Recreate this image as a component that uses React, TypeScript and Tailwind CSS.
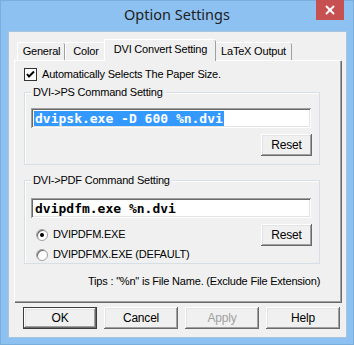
import { X } from 'lucide-react';

const ui = { fontFamily: '"Liberation Sans", Arial, sans-serif', letterSpacing: '-0.2px' };
const mono = { fontFamily: '"DejaVu Sans Mono", "Liberation Mono", monospace', letterSpacing: '0px' };

// classic 3D edges
const raised =
    'shadow-[inset_-1px_-1px_#696969,inset_1px_1px_#ffffff,inset_-2px_-2px_#a0a0a0,inset_2px_2px_#e3e3e3]';
const sunken =
    'shadow-[inset_1px_1px_#a0a0a0,inset_-1px_-1px_#ffffff,inset_2px_2px_#696969,inset_-2px_-2px_#e3e3e3]';

function Button({ label, primary, disabled }: { label: string; primary?: boolean; disabled?: boolean }) {
    return (
        <div
            className={`w-[74px] h-[22px] flex items-center justify-center bg-[#f0f0f0] text-[12px] ${primary ? 'border border-[#3c3c3c]' : ''} ${raised} ${disabled ? 'text-[#a0a0a0]' : 'text-black'}`}
        >
            {label}
        </div>
    );
}

function SmallButton({ label }: { label: string }) {
    return (
        <div className={`w-[51px] h-[22px] flex items-center justify-center bg-[#f0f0f0] text-[12px] text-black ${raised}`}>
            {label}
        </div>
    );
}

function Radio({ checked, label }: { checked?: boolean; label: string }) {
    return (
        <div className="flex items-center gap-[5px] h-[13px]">
            <div className="w-[12px] h-[12px] rounded-full bg-white border border-[#a0a0a0] shadow-[inset_1px_1px_#696969] flex items-center justify-center">
                {checked && <div className="w-[4px] h-[4px] rounded-full bg-black" />}
            </div>
            <span>{label}</span>
        </div>
    );
}

function Group({ title, height, children }: { title: string; height: number; children: React.ReactNode }) {
    return (
        <div
            className="relative border border-[#d5dfe5] shadow-[inset_1px_1px_#ffffff] mx-[9px] w-[296px]"
            style={{ height }}
        >
            <span className="absolute left-[6px] -top-[8px] bg-[#f0f0f0] px-[2px] leading-[14px]">{title}</span>
            {children}
        </div>
    );
}

export default function App() {
    const tabs = [
        { label: 'General', w: 'w-[48px]' },
        { label: 'Color', w: 'w-[41px]' },
        { label: 'DVI Convert Setting', w: 'w-[112px]' },
        { label: 'LaTeX Output', w: 'w-[78px]' },
    ];

    return (
        <div className="w-[354px] h-[345px] bg-[#8cc1f1] border border-[#7aaedd] flex flex-col" style={ui}>
            {/* Title bar */}
            <div className="relative h-[30px] flex items-center justify-center">
                <span
                    className="text-[14.5px] text-[#222] pb-[2px]"
                    style={{ fontFamily: '"Noto Sans", "Open Sans", sans-serif', letterSpacing: '0px' }}
                >
                    Option Settings
                </span>
                <div className="absolute right-[9px] -top-[1px] w-[28px] h-[20px] bg-[#c75050] flex items-center justify-center">
                    <X size={14} strokeWidth={3.2} color="#ffffff" />
                </div>
            </div>

            {/* Client area */}
            <div className="ml-[7px] mr-[6px] h-[307px] bg-[#f0f0f0] border border-[#a9c4dd] text-[11px] text-black flex flex-col">
                {/* Tabs */}
                <div className="flex items-end h-[28px] pl-[8px]">
                    {tabs.map((t, i) => {
                        const active = i === 2;
                        return (
                            <div
                                key={t.label}
                                className={`${t.w} flex items-center justify-center bg-[#f0f0f0] border-l border-t border-white rounded-t-[2px] shadow-[inset_-1px_0_#a0a0a0] ${
                                    active ? 'h-[22px] -mx-[2px] z-10 pb-[3px] relative top-[1px]' : 'h-[18px]'
                                }`}
                            >
                                {t.label}
                            </div>
                        );
                    })}
                </div>

                {/* Tab panel */}
                <div className="ml-[5px] w-[327px] h-[242px] border-l border-t border-white shadow-[inset_-1px_-1px_#a0a0a0,1px_1px_#696969] flex flex-col">
                    <div className="flex items-center gap-[5px] ml-[9px] mt-[7px] h-[13px]">
                        <div className="w-[13px] h-[13px] bg-white border border-[#333] flex items-center justify-center">
                            <svg width="9" height="9" viewBox="0 0 9 9">
                                <path d="M1 4 L3 6.5 L8 1.5" stroke="#000" strokeWidth="2" fill="none" />
                            </svg>
                        </div>
                        <span>Automatically Selects The Paper Size.</span>
                    </div>

                    <div className="mt-[11px]">
                        <Group title="DVI->PS Command Setting" height={73}>
                            <div className={`mt-[15px] ml-[6px] w-[280px] h-[20px] bg-white ${sunken} flex items-center pl-[3px]`}>
                                <span className="bg-[#3399ff] text-white text-[13px] font-bold leading-[15px] px-[1px]" style={mono}>
                                    dvipsk.exe -D 600 %n.dvi
                                </span>
                            </div>
                            <div className="flex justify-end mr-[7px] mt-[6px]">
                                <SmallButton label="Reset" />
                            </div>
                        </Group>
                    </div>

                    <div className="mt-[15px]">
                        <Group title="DVI->PDF Command Setting" height={84}>
                            <div className={`mt-[17px] ml-[6px] w-[280px] h-[20px] bg-white ${sunken} flex items-center pl-[4px]`}>
                                <span className="text-black text-[13px] font-bold leading-[15px]" style={mono}>
                                    dvipdfm.exe %n.dvi
                                </span>
                            </div>
                            <div className="flex justify-between mr-[7px] mt-[6px]">
                                <div className="flex flex-col gap-[7px] ml-[11px] mt-[4px]">
                                    <Radio checked label="DVIPDFM.EXE" />
                                    <Radio label="DVIPDFMX.EXE (DEFAULT)" />
                                </div>
                                <SmallButton label="Reset" />
                            </div>
                        </Group>
                    </div>

                    <div className="mt-[9px] ml-[73px] whitespace-nowrap">Tips : "%n" is File Name. (Exclude File Extension)</div>
                </div>

                {/* Bottom buttons */}
                <div className="flex gap-[7px] ml-[14px] mt-[5px]">
                    <Button label="OK" primary />
                    <Button label="Cancel" />
                    <Button label="Apply" disabled />
                    <Button label="Help" />
                </div>
            </div>
        </div>
    );
}
